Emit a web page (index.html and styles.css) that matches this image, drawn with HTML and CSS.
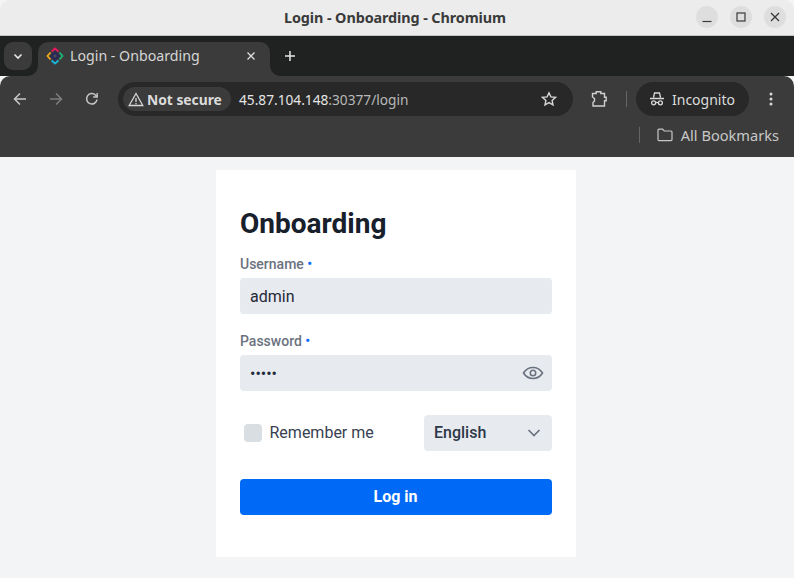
FILE: index.html
```html
<!DOCTYPE html>
<html lang="en">
<head>
<meta charset="utf-8">
<title>Login - Onboarding</title>
<link rel="stylesheet" href="styles.css">
</head>
<body>
<div class="window">
  <header class="titlebar">
    <div class="title">Login - Onboarding - Chromium</div>
    <div class="wm">
      <span class="wm-btn"><svg width="12" height="12" viewBox="0 0 12 12"><path d="M1.500 10.500h9" stroke="#3a3a3a" stroke-width="1.200" fill="none"/></svg></span>
      <span class="wm-btn"><svg width="12" height="12" viewBox="0 0 12 12"><rect x="2" y="2" width="8" height="8" stroke="#3a3a3a" stroke-width="1.200" fill="none"/></svg></span>
      <span class="wm-btn"><svg width="12" height="12" viewBox="0 0 12 12"><path d="M2 2l8 8M10 2l-8 8" stroke="#3a3a3a" stroke-width="1.300" fill="none"/></svg></span>
    </div>
  </header>

  <div class="tabstrip">
    <span class="tab-list"><svg width="12" height="12" viewBox="0 0 12 12"><path d="M2.500 4.500L6 8l3.500-3.500" stroke="#e6e6e6" stroke-width="1.600" fill="none"/></svg></span>
    <div class="tab">
      <svg class="favicon" width="18" height="18" viewBox="0 0 18 18" fill="none" stroke-width="1.800">
        <path d="M5.500 4.500L9 1.500 12.500 4.500" stroke="#e8175d"/>
        <path d="M13.500 5.500L16.500 9 13.500 12.500" stroke="#1fb877"/>
        <path d="M12.500 13.500L9 16.500 5.500 13.500" stroke="#19b5d8"/>
        <path d="M4.500 12.500L1.500 9 4.500 5.500" stroke="#f2a81d"/>
        <path d="M9 4.500L13.500 9 9 13.500 4.500 9z" fill="#27285c" stroke="#27285c" stroke-width="1"/>
        <path d="M9 7L11 9 9 11 7 9z" fill="#4a4a50" stroke="none"/>
      </svg>
      <span class="tab-title">Login - Onboarding</span>
      <svg class="tab-close" width="10" height="10" viewBox="0 0 10 10"><path d="M1.500 1.500l7 7M8.500 1.500l-7 7" stroke="#e0e0e0" stroke-width="1.300" fill="none"/></svg>
    </div>
    <svg class="new-tab" width="12" height="12" viewBox="0 0 12 12"><path d="M6 1v10M1 6h10" stroke="#e6e6e6" stroke-width="1.500" fill="none"/></svg>
  </div>

  <div class="toolbar">
    <div class="navrow">
      <svg class="nav-icon" width="16" height="16" viewBox="0 0 16 16" fill="none" stroke="#c7c7c7" stroke-width="1.500"><path d="M14 8H2.500M8 2.500L2.500 8 8 13.500"/></svg>
      <svg class="nav-icon" width="16" height="16" viewBox="0 0 16 16" fill="none" stroke="#7d7d7d" stroke-width="1.500"><path d="M2 8h11.500M8 2.500L13.500 8 8 13.500"/></svg>
      <svg class="nav-icon" width="16" height="16" viewBox="0 0 16 16" fill="none" stroke="#c7c7c7" stroke-width="1.500"><path d="M13 8.500A5.200 5.200 0 1 1 11.600 4.200L13 5.600"/><path d="M13.200 2v4h-4" stroke-width="1.400"/></svg>
      <div class="omnibox">
        <span class="chip">
          <svg width="16" height="15" viewBox="0 0 16 15" fill="none" stroke="#d6d6d6" stroke-width="1.300"><path d="M8 1.500L14.800 13.500H1.200z"/><path d="M8 6v4M8 11v1.200"/></svg>
          <span class="chip-text">Not secure</span>
        </span>
        <span class="url">45.87.104.148<span class="url-dim">:30377/login</span></span>
        <svg class="star" width="16" height="16" viewBox="0 0 16 16" fill="none" stroke="#d6d6d6" stroke-width="1.400"><path d="M8 1.800l1.900 4.100 4.500.5-3.300 3 .9 4.400L8 11.600l-4 2.200.9-4.400-3.300-3 4.500-.5z"/></svg>
      </div>
      <svg class="ext" width="18" height="18" viewBox="0 0 18 18" fill="none" stroke="#cfcfcf" stroke-width="1.400"><path d="M2.500 3.500h3.700V1.800h4.600v1.700h3.700v3.700h1.700v3.600h-1.700v5.200H3V12.500l1.500-1.500V8.500L2.500 7z"/></svg>
      <span class="vsep"></span>
      <span class="incognito">
        <svg width="16" height="16" viewBox="0 0 16 16" fill="none" stroke="#d8d8d8" stroke-width="1.300"><path d="M4.500 6.500L5.500 2h5l1 4.500M1 7.500h14"/><circle cx="4.600" cy="11.800" r="2"/><circle cx="11.400" cy="11.800" r="2"/><path d="M6.600 11.500h2.800"/></svg>
        <span>Incognito</span>
      </span>
      <svg class="menu" width="4" height="14" viewBox="0 0 4 14" fill="#d8d8d8"><circle cx="2" cy="2" r="1.500"/><circle cx="2" cy="7" r="1.500"/><circle cx="2" cy="12" r="1.500"/></svg>
    </div>
    <div class="bookmarks">
      <span class="vsep vsep-bm"></span>
      <svg width="16" height="14" viewBox="0 0 16 14" fill="none" stroke="#c8c8c8" stroke-width="1.200"><path d="M1 2.200c0-.6.4-1 1-1h3.600l1.600 1.800H14c.6 0 1 .4 1 1v7.600c0 .6-.4 1-1 1H2c-.6 0-1-.4-1-1z"/></svg>
      <span class="bm-text">All Bookmarks</span>
    </div>
  </div>

  <main class="page">
    <form class="card">
      <h1 class="heading">Onboarding</h1>
      <div class="field">
        <label class="label">Username <span class="req">•</span></label>
        <div class="input">admin</div>
      </div>
      <div class="field field-pass">
        <label class="label">Password <span class="req">•</span></label>
        <div class="input input-pass">
          <span class="dots">•••••</span>
          <svg width="22" height="16" viewBox="0 0 22 16" fill="none" stroke="#6b7280" stroke-width="1.600"><path d="M1.500 8C4 4 7 2.500 11 2.500S18 4 20.500 8C18 12 15 13.500 11 13.500S4 12 1.500 8z"/><circle cx="11" cy="8" r="2.700"/></svg>
        </div>
      </div>
      <div class="options">
        <span class="remember"><span class="check"></span><span class="remember-text">Remember me</span></span>
        <div class="select">
          <span class="select-text">English</span>
          <svg width="14" height="8" viewBox="0 0 14 8" fill="none" stroke="#6b7280" stroke-width="1.700"><path d="M1.500 1L7 6.500 12.500 1"/></svg>
        </div>
      </div>
      <button class="submit" type="button">Log in</button>
    </form>
  </main>
</div>
</body>
</html>
```
FILE: styles.css
```css
* { box-sizing: border-box; }
html, body { margin: 0; padding: 0; height: 100%; overflow: hidden; background: #f3f4f6; }
.window { width: 794px; height: 578px; display: flex; flex-direction: column; font-family: "Noto Sans", sans-serif; }

.titlebar { height: 36px; flex: none; background: #ececec; border-bottom: 1px solid #c4c4c4; display: flex; align-items: center; justify-content: center; position: relative; border-radius: 10px 10px 0 0; }
.title { font-weight: 700; font-size: 14.4px; color: #3a3a3a; letter-spacing: -0.1px; margin-right: 4px; }
.wm { position: absolute; right: 8px; top: 6px; display: flex; gap: 12px; }
.wm-btn { width: 22px; height: 22px; border-radius: 50%; background: #dedede; display: flex; align-items: center; justify-content: center; }

.tabstrip { height: 40px; flex: none; background: #202221; display: flex; align-items: flex-end; padding-left: 4px; position: relative; }
.tab-list { width: 28px; height: 28px; margin-bottom: 6px; background: #3b3b3b; border-radius: 9px; display: flex; align-items: center; justify-content: center; flex: none; }
.tab { width: 232px; height: 34px; margin-left: 6px; background: #3b3b3b; border-radius: 10px 10px 0 0; display: flex; align-items: center; padding: 0 14px 7px 8px; flex: none; position: relative; }
.tab::before, .tab::after { content: ""; position: absolute; bottom: 0; width: 10px; height: 10px; }
.tab::before { left: -10px; background: radial-gradient(circle at 0 0, transparent 9.500px, #3b3b3b 10px); }
.tab::after { right: -10px; background: radial-gradient(circle at 100% 0, transparent 9.500px, #3b3b3b 10px); }
.favicon { flex: none; }
.tab-title { margin-left: 6px; flex: 1; font-size: 14.2px; color: #d6d6d6; white-space: nowrap; }
.new-tab { margin: 0 0 14px 14px; flex: none; }

.toolbar { height: 81px; flex: none; background: #3b3b3b; border-radius: 10px 10px 0 0; display: flex; flex-direction: column; padding-top: 6px; }
.navrow { height: 34px; display: flex; align-items: center; padding-left: 12px; flex: none; }
.nav-icon { flex: none; margin-right: 20px; }
.nav-icon:nth-child(3) { margin-right: 18px; }
.omnibox { width: 455px; height: 34px; background: #282828; border-radius: 17px; display: flex; align-items: center; padding: 0 16px 0 5px; flex: none; }
.chip { height: 24px; width: 108px; background: #3b3b3b; border-radius: 12px; display: flex; align-items: center; gap: 3px; padding-left: 5px; font-size: 13.800px; font-weight: 700; color: #dcdcdc; flex: none; }
.chip-text { white-space: nowrap; }
.url { margin-left: 8px; flex: 1; font-size: 13.7px; color: #e6e6e6; white-space: nowrap; }
.url-dim { color: #b8b8b8; }
.ext { margin-left: 17px; flex: none; }
.vsep { width: 1px; height: 16px; background: #666; margin-left: 18px; flex: none; }
.incognito { margin-left: 9px; height: 34px; width: 113px; background: #282828; border-radius: 17px; display: flex; align-items: center; gap: 7px; padding-left: 13px; font-size: 14px; color: #dcdcdc; flex: none; }
.menu { margin-left: 20px; flex: none; }
.bookmarks { flex: 1; display: flex; align-items: center; justify-content: flex-end; padding: 0 15px 3px 0; font-size: 14.6px; color: #c8c8c8; }
.vsep-bm { margin: 0 17px 0 0; }
.bm-text { margin-left: 8px; white-space: nowrap; }

.page { flex: 1; min-height: 0; background: #f3f4f6; display: flex; justify-content: center; align-items: flex-start; padding: 13px 2px 0 0; font-family: Roboto, sans-serif; }
.card { width: 360px; height: 387px; background: #fff; padding: 39px 24px 0; display: flex; flex-direction: column; }
.heading { margin: 0; font-size: 28px; line-height: 30px; font-weight: 700; color: #18202c; }
.field { display: flex; flex-direction: column; margin-top: 17px; }
.field-pass { margin-top: 19px; }
.label { font-size: 14px; line-height: 16px; font-weight: 500; color: #6b7280; margin: 0 0 6px 0; }
.req { color: #0a6cff; font-size: 14px; margin-left: 0; }
.input { height: 36px; background: #e7eaef; border-radius: 4px; display: flex; align-items: center; padding: 0 8px 0 10px; font-size: 16px; color: #1f2937; }
.input-pass { justify-content: space-between; }
.dots { font-size: 16px; }
.options { display: flex; justify-content: space-between; align-items: center; margin-top: 24px; padding-left: 4px; height: 36px; }
.remember { display: flex; align-items: center; gap: 7.500px; font-size: 16px; color: #374151; }
.remember-text { padding-bottom: 2px; }
.check { width: 18px; height: 18px; background: #d9dee3; border-radius: 4px; flex: none; }
.select { width: 128px; height: 36px; background: #e7eaef; border-radius: 4px; display: flex; align-items: center; justify-content: space-between; padding: 0 11px 0 10px; font-size: 16px; font-weight: 500; color: #2d3748; }
.select-text { padding-bottom: 2px; }
.submit { margin-top: 28px; height: 36px; width: 100%; background: #0069f6; color: #fff; border: none; border-radius: 4px; font-family: Roboto, sans-serif; font-size: 16px; font-weight: 700; padding: 0 1px 2px 0; }
```
